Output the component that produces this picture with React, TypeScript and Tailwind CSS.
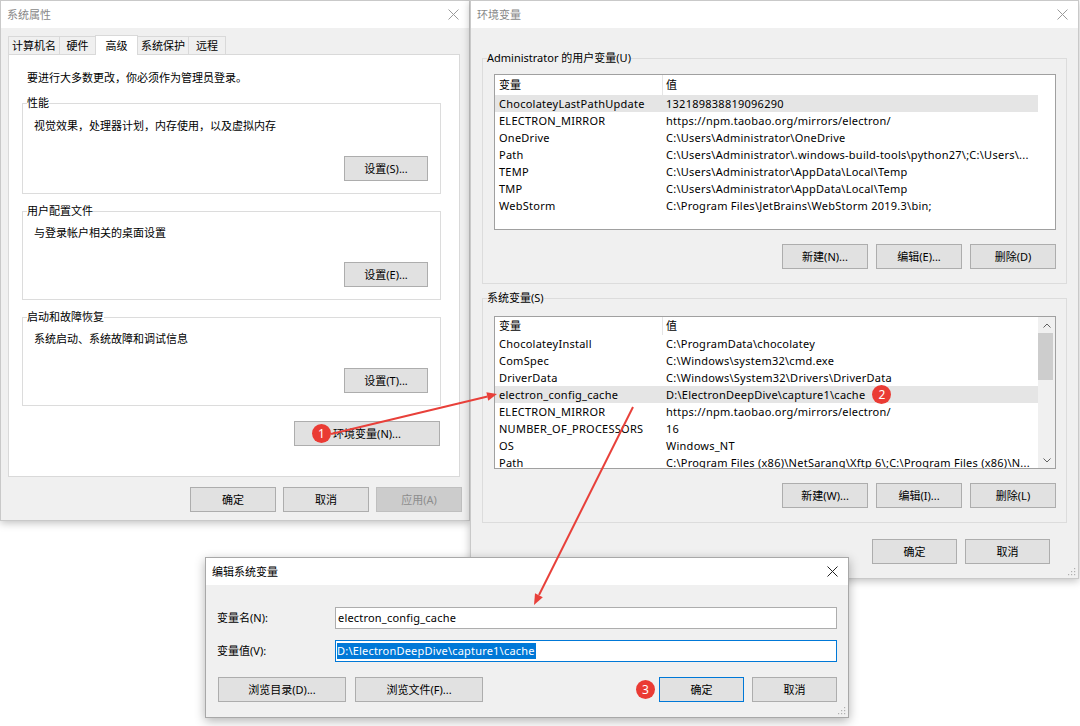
import React from "react";

// Windows 10 style dialogs: 系统属性 / 环境变量 / 编辑系统变量, with red callouts

const CloseX = ({ dark }: { dark?: boolean }) => (
	<svg width="11" height="11" viewBox="0 0 11 11">
		<path
			d="M0.5 0.5L10.5 10.5M10.5 0.5L0.5 10.5"
			stroke={dark ? "#222222" : "#9a9a9a"}
			strokeWidth="1"
		/>
	</svg>
);

const Grip = () => (
	<svg
		width="10"
		height="10"
		viewBox="0 0 10 10"
		className="absolute bottom-[2px] right-[2px]"
	>
		{[
			[8, 2],
			[8, 5],
			[5, 5],
			[8, 8],
			[5, 8],
			[2, 8],
		].map(([x, y], i) => (
			<rect key={i} x={x} y={y} width="1.2" height="1.2" fill="#b0b0b0" />
		))}
	</svg>
);

const Badge = ({ n, className }: { n: number; className?: string }) => (
	<span
		className={`flex h-[19px] w-[19px] shrink-0 items-center justify-center rounded-full bg-[#ea3b34] text-[12px] leading-none tracking-normal text-white ${
			className ?? ""
		}`}
	>
		{n}
	</span>
);

type BtnProps = {
	children: React.ReactNode;
	w?: string;
	disabled?: boolean;
	primary?: boolean;
	className?: string;
};

const Btn = ({ children, w = "w-[86px]", disabled, primary, className }: BtnProps) => (
	<div
		className={`relative flex h-[25px] shrink-0 items-center justify-center border ${w} ${
			primary
				? "border-[#0078d7]"
				: disabled
				? "border-[#bfbfbf]"
				: "border-[#adadad]"
		} ${disabled ? "bg-[#cccccc] text-[#8d8d8d]" : "bg-[#e1e1e1] text-black"} ${
			className ?? ""
		}`}
	>
		{children}
	</div>
);

const TitleBar = ({ title, active }: { title: string; active?: boolean }) => (
	<div className="flex h-[27px] shrink-0 items-center justify-between bg-white pl-[6px] pr-[10px]">
		<span className={active ? "text-black" : "text-[#888888]"}>{title}</span>
		<CloseX dark={active} />
	</div>
);

const Group = ({
	label,
	className,
	children,
}: {
	label: string;
	className?: string;
	children: React.ReactNode;
}) => (
	<fieldset className={`border border-[#dcdcdc] ${className ?? ""}`}>
		<legend className="ml-[4px] leading-4">{label}</legend>
		{children}
	</fieldset>
);

const Chevron = ({ up }: { up?: boolean }) => (
	<svg width="8" height="5" viewBox="0 0 8 5">
		<path
			d={up ? "M0.5 4.5L4 1L7.5 4.5" : "M0.5 0.5L4 4L7.5 0.5"}
			stroke="#606060"
			strokeWidth="1"
			fill="none"
		/>
	</svg>
);

const ScrollBar = () => (
	<div className="flex w-[17px] shrink-0 flex-col bg-[#f0f0f0]">
		<div className="flex h-[16px] items-center justify-center">
			<Chevron up />
		</div>
		<div className="mr-[2px] h-[47px] bg-[#cdcdcd]" />
		<div className="flex-1" />
		<div className="flex h-[16px] items-center justify-center">
			<Chevron />
		</div>
	</div>
);

type Row = { k: string; v: string; badge?: number };

const ListView = ({
	rows,
	highlight,
	h,
	head,
	scroll,
}: {
	rows: Row[];
	highlight: number;
	h: string;
	head: string;
	scroll?: boolean;
}) => (
	<div className={`ml-[11px] flex w-[562px] border border-[#a0a0a0] bg-white ${h}`}>
		<div className="flex-1 overflow-hidden">
			<div className={`flex items-center ${head}`}>
				<div className="w-[167px] pl-[4px]">变量</div>
				<div className="h-full w-px bg-[#e5e5e5]" />
				<div className="pl-[3px]">值</div>
			</div>
			{rows.map((r, i) => (
				<div
					key={r.k}
					className={`flex h-[17px] w-[543px] items-center whitespace-nowrap tracking-[0.25px] ${
						i === highlight ? "bg-[#e5e5e5]" : ""
					}`}
				>
					<div className="w-[167px] pl-[4px]">{r.k}</div>
					<div className="flex items-center pl-[4px]">
						{r.v}
						{r.badge && <Badge n={r.badge} className="ml-[7px]" />}
					</div>
				</div>
			))}
		</div>
		{scroll && <ScrollBar />}
	</div>
);

const userVars: Row[] = [
	{ k: "ChocolateyLastPathUpdate", v: "132189838819096290" },
	{ k: "ELECTRON_MIRROR", v: "https://npm.taobao.org/mirrors/electron/" },
	{ k: "OneDrive", v: "C:\\Users\\Administrator\\OneDrive" },
	{
		k: "Path",
		v: "C:\\Users\\Administrator\\.windows-build-tools\\python27\\;C:\\Users\\...",
	},
	{ k: "TEMP", v: "C:\\Users\\Administrator\\AppData\\Local\\Temp" },
	{ k: "TMP", v: "C:\\Users\\Administrator\\AppData\\Local\\Temp" },
	{ k: "WebStorm", v: "C:\\Program Files\\JetBrains\\WebStorm 2019.3\\bin;" },
];

const sysVars: Row[] = [
	{ k: "ChocolateyInstall", v: "C:\\ProgramData\\chocolatey" },
	{ k: "ComSpec", v: "C:\\Windows\\system32\\cmd.exe" },
	{ k: "DriverData", v: "C:\\Windows\\System32\\Drivers\\DriverData" },
	{ k: "electron_config_cache", v: "D:\\ElectronDeepDive\\capture1\\cache", badge: 2 },
	{ k: "ELECTRON_MIRROR", v: "https://npm.taobao.org/mirrors/electron/" },
	{ k: "NUMBER_OF_PROCESSORS", v: "16" },
	{ k: "OS", v: "Windows_NT" },
	{
		k: "Path",
		v: "C:\\Program Files (x86)\\NetSarang\\Xftp 6\\;C:\\Program Files (x86)\\N...",
	},
];

const tabs = [
	{ name: "计算机名", w: "w-[52px]" },
	{ name: "硬件", w: "w-[37px]" },
	{ name: "高级", w: "w-[43px]", active: true },
	{ name: "系统保护", w: "w-[52px]" },
	{ name: "远程", w: "w-[38px]" },
];

const SettingGroup = ({
	label,
	desc,
	btn,
	pt,
	gap,
	className,
}: {
	label: string;
	desc: string;
	btn: string;
	pt: string;
	gap: string;
	className: string;
}) => (
	<Group label={label} className={`w-[419px] ${className}`}>
		<div className={`pl-[11px] leading-4 ${pt}`}>{desc}</div>
		<div className={`flex justify-end pb-[12px] pr-[12px] ${gap}`}>
			<Btn w="w-[84px]">{btn}</Btn>
		</div>
	</Group>
);

const SystemProps = () => (
	<div className="absolute left-0 top-0 flex h-[521px] w-[470px] flex-col border border-[#c9c9c9] bg-[#f0f0f0] shadow-[0_2px_8px_rgba(0,0,0,0.25)]">
		<TitleBar title="系统属性" />
		<div className="relative z-10 -mb-px mt-[7px] flex h-[20px] items-end pl-[7px]">
			{tabs.map((t, i) => (
				<div
					key={t.name}
					className={`flex items-center justify-center border border-b-0 border-[#d9d9d9] ${t.w} ${
						i > 0 ? "-ml-px" : ""
					} ${t.active ? "h-[20px] bg-white" : "mb-px h-[18px] bg-[#f0f0f0]"}`}
				>
					{t.name}
				</div>
			))}
		</div>
		<div className="ml-[7px] flex h-[423px] w-[452px] flex-col border border-[#d9d9d9] bg-white pl-[13px] pt-[15px]">
			<div className="ml-[5px] leading-4">要进行大多数更改，你必须作为管理员登录。</div>
			<SettingGroup
				label="性能"
				desc="视觉效果，处理器计划，内存使用，以及虚拟内存"
				btn="设置(S)..."
				pt="pt-[7px]"
				gap="mt-[22px]"
				className="mt-[9px]"
			/>
			<SettingGroup
				label="用户配置文件"
				desc="与登录帐户相关的桌面设置"
				btn="设置(E)..."
				pt="pt-[6px]"
				gap="mt-[21px]"
				className="mt-[9px]"
			/>
			<SettingGroup
				label="启动和故障恢复"
				desc="系统启动、系统故障和调试信息"
				btn="设置(T)..."
				pt="pt-[6px]"
				gap="mt-[21px]"
				className="mt-[9px]"
			/>
			<div className="mt-[15px] flex w-[419px] justify-end pr-px">
				<Btn w="w-[146px]">
					<Badge n={1} className="absolute left-[17px] top-[2px]" />
					环境变量(N)...
				</Btn>
			</div>
		</div>
		<div className="mt-[10px] flex justify-end gap-[7px] pr-[7px]">
			<Btn>确定</Btn>
			<Btn>取消</Btn>
			<Btn disabled>应用(A)</Btn>
		</div>
	</div>
);

const EnvVars = () => (
	<div className="absolute left-[470px] top-0 flex h-[579px] w-[609px] flex-col border border-[#c9c9c9] bg-[#f0f0f0] shadow-[0_2px_8px_rgba(0,0,0,0.25)]">
		<TitleBar title="环境变量" />
		<div className="flex flex-col pl-[11px] pt-[22px]">
			<Group label="Administrator 的用户变量(U)" className="w-[585px] pb-[14px]">
				<div className="mt-[8px]">
					<ListView rows={userVars} highlight={0} h="h-[156px]" head="h-[20px]" />
				</div>
				<div className="ml-[11px] mt-[14px] flex w-[562px] justify-end gap-[8px]">
					<Btn>新建(N)...</Btn>
					<Btn>编辑(E)...</Btn>
					<Btn>删除(D)</Btn>
				</div>
			</Group>
			<Group label="系统变量(S)" className="mt-[6px] w-[585px] pb-[14px]">
				<div className="mt-[10px]">
					<ListView
						rows={sysVars}
						highlight={3}
						h="h-[153px]"
						head="h-[18px]"
						scroll
					/>
				</div>
				<div className="ml-[11px] mt-[14px] flex w-[562px] justify-end gap-[8px]">
					<Btn>新建(W)...</Btn>
					<Btn>编辑(I)...</Btn>
					<Btn>删除(L)</Btn>
				</div>
			</Group>
		</div>
		<div className="mt-[16px] flex justify-end gap-[8px] pr-[28px]">
			<Btn w="w-[85px]">确定</Btn>
			<Btn w="w-[85px]">取消</Btn>
		</div>
		<Grip />
	</div>
);

const EditVar = () => (
	<div className="absolute left-[205px] top-[557px] flex h-[161px] w-[644px] flex-col border border-[#a8a8a8] bg-[#f0f0f0] shadow-[0_3px_10px_rgba(0,0,0,0.3)]">
		<TitleBar title="编辑系统变量" active />
		<div className="flex flex-col pl-[11px] pr-[11px] pt-[22px]">
			<div className="flex items-center">
				<div className="w-[118px]">变量名(N):</div>
				<div className="flex h-[22px] w-[502px] items-center border border-[#adadad] bg-white pl-[2px] tracking-[0.2px]">
					electron_config_cache
				</div>
			</div>
			<div className="mt-[11px] flex items-center">
				<div className="w-[118px]">变量值(V):</div>
				<div className="flex h-[22px] w-[502px] items-center border border-[#0078d7] bg-white pl-px tracking-[0.2px]">
					<span className="bg-[#0078d7] pr-px text-white">
						D:\ElectronDeepDive\capture1\cache
					</span>
				</div>
			</div>
			<div className="mt-[15px] flex items-center">
				<Btn w="w-[128px]" className="ml-px">
					浏览目录(D)...
				</Btn>
				<Btn w="w-[128px]" className="ml-[9px]">
					浏览文件(F)...
				</Btn>
				<div className="flex-1" />
				<Badge n={3} />
				<Btn w="w-[85px]" primary className="ml-[4px]">
					确定
				</Btn>
				<Btn w="w-[85px]" className="ml-[8px]">
					取消
				</Btn>
			</div>
		</div>
		<Grip />
	</div>
);

const Arrows = () => (
	<svg
		width="1080"
		height="726"
		viewBox="0 0 1080 726"
		className="pointer-events-none absolute left-0 top-0"
	>
		<line x1="331" y1="434" x2="487.5" y2="396.5" stroke="#e8403a" strokeWidth="2" />
		<polygon points="497,394 488.2,400.8 486.4,392.2" fill="#e8403a" />
		<line x1="633" y1="407" x2="539" y2="595" stroke="#e8403a" strokeWidth="2" />
		<polygon points="534,605 542.8,597.2 535,593.3" fill="#e8403a" />
	</svg>
);

export default function App() {
	return (
		<div className="relative h-[726px] w-[1080px] overflow-hidden bg-white font-['Noto_Sans','Noto_Sans_CJK_SC',sans-serif] text-[11px] leading-4 text-black">
			<SystemProps />
			<EnvVars />
			<EditVar />
			<Arrows />
		</div>
	);
}
